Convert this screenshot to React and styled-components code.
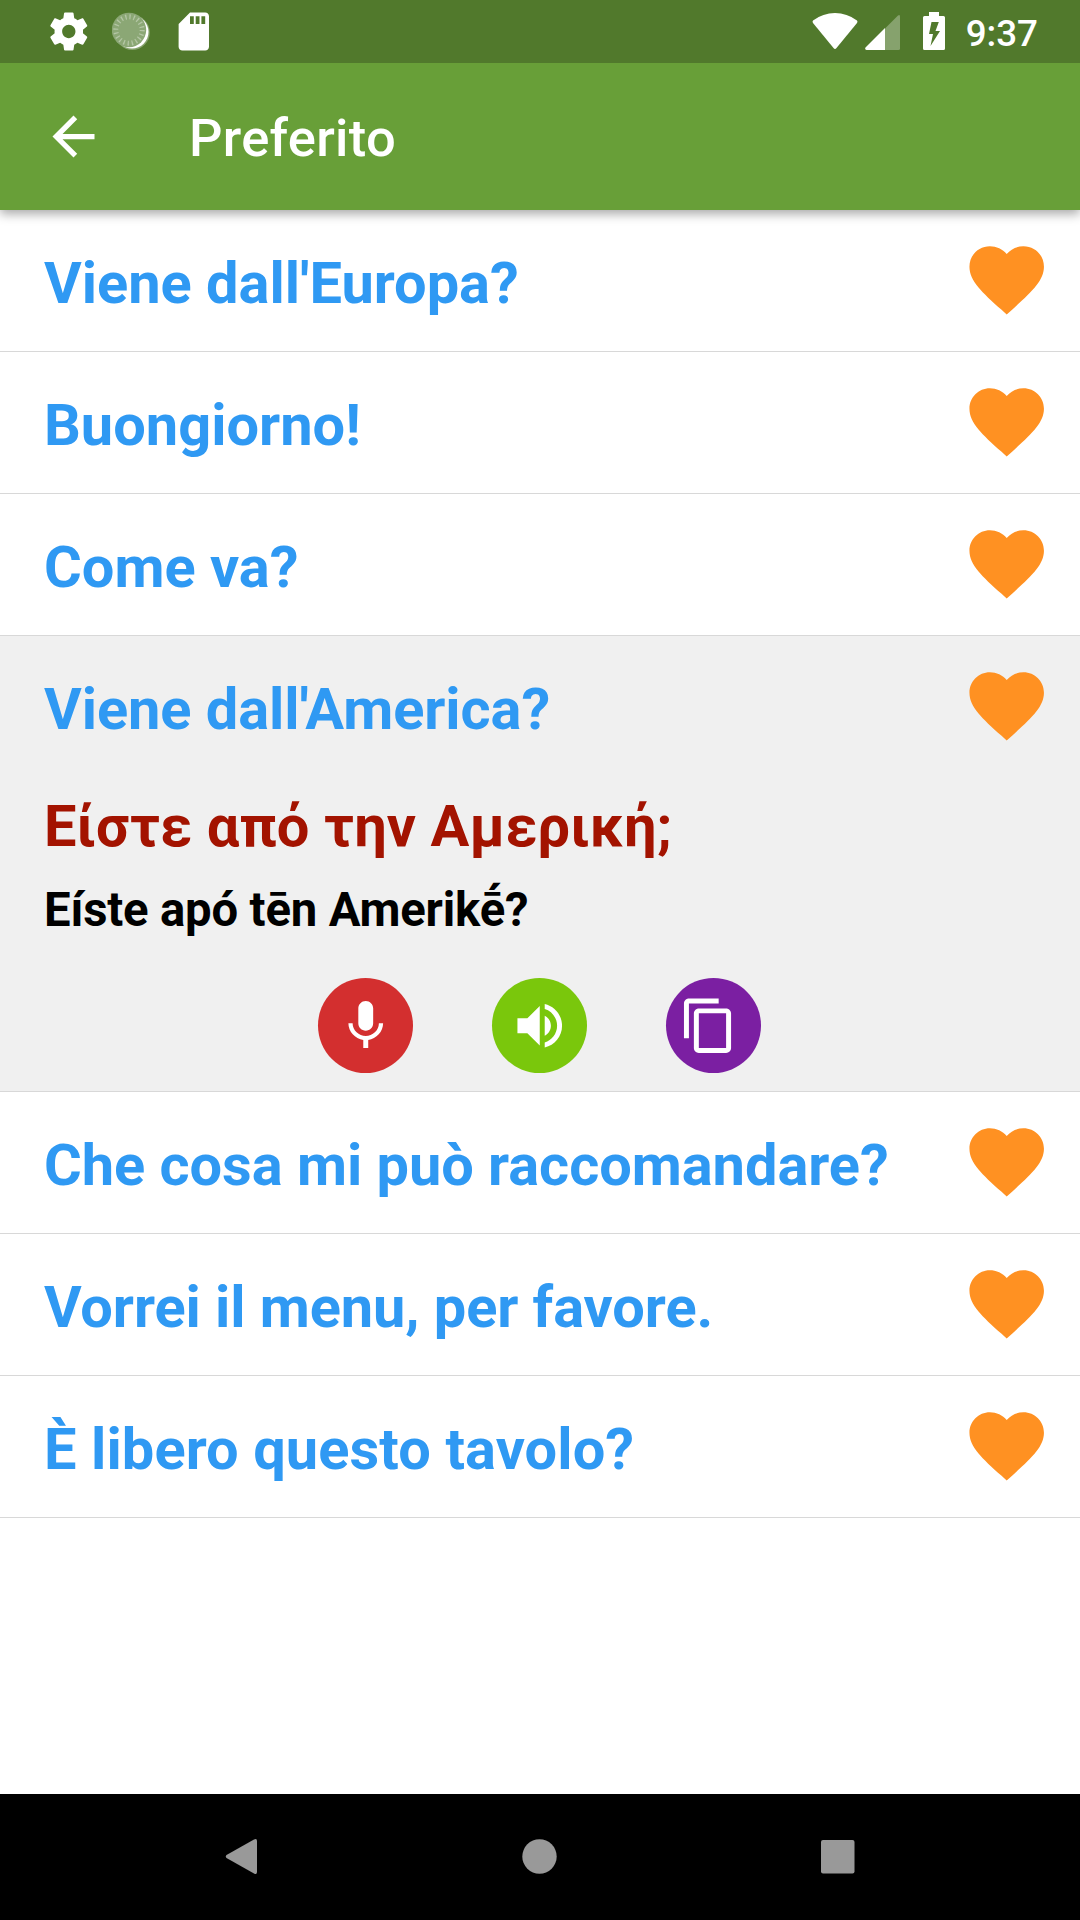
import React from "react";
import styled, { createGlobalStyle } from "styled-components";

const GlobalStyle = createGlobalStyle`
  * {
    box-sizing: border-box;
  }
  body {
    margin: 0;
    background: #ffffff;
    font-family: Roboto, "Noto Sans", sans-serif;
  }
  h1, h2, p, ul {
    margin: 0;
    padding: 0;
  }
  svg {
    display: block;
    flex: none;
  }
`;

const Screen = styled.div`
  width: 1080px;
  height: 1920px;
  display: flex;
  flex-direction: column;
  background: #ffffff;
  overflow: hidden;
`;

const StatusBar = styled.div`
  height: 63px;
  flex: none;
  display: flex;
  justify-content: space-between;
  background: #51792c;
  color: white;
  padding: 0 42px 0 45.5px;
  z-index: 2;
`;

const StatusGroup = styled.div`
  display: flex;
  align-items: center;
`;

const StatusIcon = styled.svg`
  width: ${(props) => props.$width}px;
  height: 63px;
  margin-right: ${(props) => props.$gap || 0}px;
`;

const Clock = styled.time`
  font-size: 36.75px;
  font-weight: 500;
  line-height: 63px;
  padding-top: 3px;
`;

const AppBar = styled.header`
  height: 147px;
  flex: none;
  display: flex;
  align-items: center;
  gap: 84px;
  padding-left: 42px;
  background: #689f38;
  color: white;
  box-shadow: 0 4px 10px rgba(0, 0, 0, 0.34);
  z-index: 1;
  h1 {
    font-size: 52.5px;
    font-weight: 500;
    line-height: 62px;
    letter-spacing: 0.3px;
    padding-top: 3px;
  }
`;

const PhraseList = styled.ul`
  flex: 1;
  list-style: none;
`;

const PhraseItem = styled.li`
  background: ${(props) => (props.$open ? "#f0f0f0" : "#ffffff")};
  border-bottom: 1px solid #d8d8d8;
`;

const PhraseHeader = styled.div`
  height: 141px;
  display: flex;
  align-items: center;
  justify-content: space-between;
  padding: 0 28.7px 0 44px;
  svg {
    margin-bottom: 1px;
  }
`;

const PhraseText = styled.h2`
  color: #2f99f3;
  font-size: 57.75px;
  font-weight: 700;
  line-height: 68px;
  letter-spacing: ${(props) => props.$tracking || 0}px;
  padding-top: 4px;
  white-space: nowrap;
`;

const Translation = styled.div`
  height: 314px;
  padding: 15px 44px 0;
  font-weight: 700;
`;

const Greek = styled.p`
  color: #a31300;
  font-size: 57.75px;
  line-height: 68px;
  letter-spacing: 0.1px;
`;

const Transcription = styled.p`
  color: #000000;
  font-size: 47.25px;
  line-height: 56px;
  letter-spacing: -0.17px;
  margin-top: 22px;
`;

const Actions = styled.div`
  display: flex;
  justify-content: center;
  gap: 79px;
  margin-top: 40px;
  margin-left: -1px;
`;

const RoundButton = styled.button`
  width: 95px;
  height: 95px;
  border: none;
  border-radius: 50%;
  padding: 0 ${(props) => props.$shift || 0}px 0 0;
  display: flex;
  align-items: center;
  justify-content: center;
  background: ${(props) => props.$color};
`;

const NavBar = styled.nav`
  height: 126px;
  flex: none;
  display: flex;
  justify-content: center;
  align-items: center;
  gap: 235px;
  padding: 0 1px 1px 0;
  background: #000000;
  svg {
    width: 63px;
    height: 63px;
    fill: #999999;
  }
`;

const Icon = ({ d, size = 59.5, color = "#ffffff" }) => (
  <svg width={size} height={size} viewBox="0 0 24 24" fill={color}>
    <path d={d} />
  </svg>
);

const icons = {
  back: "M20 11H7.83l5.59-5.59L12 4l-8 8 8 8 1.41-1.41L7.83 13H20v-2z",
  heart:
    "M12 21.35l-1.45-1.32C5.4 15.36 2 12.28 2 8.5 2 5.42 4.42 3 7.5 3c1.74 0 3.41.81 4.5 2.09C13.09 3.81 14.76 3 16.5 3 19.58 3 22 5.42 22 8.5c0 3.78-3.4 6.86-8.55 11.54L12 21.35z",
  mic: "M12 14c1.66 0 2.99-1.34 2.99-3L15 5c0-1.66-1.34-3-3-3S9 3.34 9 5v6c0 1.66 1.34 3 3 3zm5.3-3c0 3-2.54 5.1-5.3 5.1S6.7 14 6.7 11H5c0 3.41 2.72 6.23 6 6.72V21h2v-3.28c3.28-.48 6-3.3 6-6.72h-1.7z",
  volume:
    "M3 9v6h4l5 5V4L7 9H3zm13.5 3c0-1.77-1.02-3.29-2.5-4.03v8.05c1.48-.73 2.5-2.25 2.5-4.02zM14 3.23v2.06c2.89.86 5 3.54 5 6.71s-2.11 5.85-5 6.71v2.06c4.01-.91 7-4.49 7-8.77s-2.99-7.86-7-8.77z",
  copy: "M16 1H4c-1.1 0-2 .9-2 2v14h2V3h12V1zm3 4H8c-1.1 0-2 .9-2 2v14c0 1.1.9 2 2 2h11c1.1 0 2-.9 2-2V7c0-1.1-.9-2-2-2zm0 16H8V7h11v14z",
  settings:
    "M19.43 12.98c.04-.32.07-.64.07-.98s-.03-.66-.07-.98l2.11-1.65c.19-.15.24-.42.12-.64l-2-3.46c-.12-.22-.39-.3-.61-.22l-2.49 1c-.52-.4-1.08-.73-1.69-.98l-.38-2.65C14.46 2.18 14.25 2 14 2h-4c-.25 0-.46.18-.49.42l-.38 2.65c-.61.25-1.17.59-1.69.98l-2.49-1c-.23-.09-.49 0-.61.22l-2 3.46c-.13.22-.07.49.12.64l2.11 1.65c-.04.32-.07.65-.07.98s.03.66.07.98l-2.11 1.65c-.19.15-.24.42-.12.64l2 3.46c.12.22.39.3.61.22l2.49-1c.52.4 1.08.73 1.69.98l.38 2.65c.03.24.24.42.49.42h4c.25 0 .46-.18.49-.42l.38-2.65c.61-.25 1.17-.59 1.69-.98l2.49 1c.23.09.49 0 .61-.22l2-3.46c.12-.22.07-.49-.12-.64l-2.11-1.65zM12 15.5c-1.93 0-3.5-1.57-3.5-3.5s1.57-3.5 3.5-3.5 3.5 1.57 3.5 3.5-1.57 3.5-3.5 3.5z",
  sdCard:
    "M18 2h-8L4.02 8 4 20c0 1.1.9 2 2 2h12c1.1 0 2-.9 2-2V4c0-1.1-.9-2-2-2zm-6 6h-2V4h2v4zm3 0h-2V4h2v4zm3 0h-2V4h2v4z",
};

const Spinner = () => (
  <StatusIcon $width={40} $gap={19} viewBox="0 0 40 63">
    <circle cx="20.3" cy="32.5" r="17.5" fill="#86a26d" />
    <circle cx="20" cy="32" r="16.5" fill="#ffffff" />
    <circle cx="17" cy="30" r="17.2" fill="#8ba775" />
    <circle
      cx="17"
      cy="30"
      r="13.2"
      fill="none"
      stroke="#b4c6a5"
      strokeWidth="5"
      strokeDasharray="1.3 2.847"
    />
  </StatusIcon>
);

const phrases = [
  { text: "Viene dall'Europa?" },
  { text: "Buongiorno!" },
  { text: "Come va?" },
  {
    text: "Viene dall'America?",
    tracking: -0.06,
    greek: "Είστε από την Αμερική;",
    transcription: "Eíste apó tēn Amerikḗ?",
  },
  { text: "Che cosa mi può raccomandare?", tracking: -0.04 },
  { text: "Vorrei il menu, per favore.", tracking: -0.08 },
  { text: "È libero questo tavolo?", tracking: 0.1 },
];

const Phrase = ({ phrase }) => (
  <PhraseItem $open={!!phrase.greek}>
    <PhraseHeader>
      <PhraseText $tracking={phrase.tracking}>{phrase.text}</PhraseText>
      <Icon d={icons.heart} size={89.4} color="#ff9122" />
    </PhraseHeader>
    {phrase.greek && (
      <Translation>
        <Greek>{phrase.greek}</Greek>
        <Transcription>{phrase.transcription}</Transcription>
        <Actions>
          <RoundButton $color="#d32f2f">
            <Icon d={icons.mic} />
          </RoundButton>
          <RoundButton $color="#7ac70c">
            <Icon d={icons.volume} />
          </RoundButton>
          <RoundButton $color="#7b1fa2" $shift={9}>
            <Icon d={icons.copy} />
          </RoundButton>
        </Actions>
      </Translation>
    )}
  </PhraseItem>
);

const App = () => (
  <>
    <GlobalStyle />
    <Screen>
      <StatusBar>
        <StatusGroup>
          <StatusIcon $width={45.6} $gap={21} viewBox="0 0 24 24" fill="#ffffff">
            <path d={icons.settings} />
          </StatusIcon>
          <Spinner />
          <StatusIcon $width={45.6} viewBox="0 0 24 24" fill="#ffffff">
            <path d={icons.sdCard} />
          </StatusIcon>
        </StatusGroup>
        <StatusGroup>
          {/* wifi */}
          <StatusIcon $width={46} $gap={7} viewBox="0 0 46 63">
            <path
              d="M1 20.5Q11 13 23 13T45 20.5Q46 21.5 45 23L24.5 48Q23 49.8 21.5 48L1 23Q0 21.5 1 20.5Z"
              fill="#ffffff"
            />
          </StatusIcon>
          {/* cell signal */}
          <StatusIcon $width={35} $gap={23} viewBox="0 0 35 63">
            <path d="M20 28.5L33 15.5Q35 14 35 16.5V48.5Q35 50 33.5 50H20Z" fill="#86a26d" />
            <path d="M20 28V50H1.5Q-0.5 49.5 0.5 47.5Z" fill="#ffffff" />
          </StatusIcon>
          {/* battery charging */}
          <StatusIcon $width={22} $gap={21} viewBox="0 0 22 63">
            <path
              fillRule="evenodd"
              d="M6 12H16V16H20.5Q22 16 22 17.5V48.5Q22 50 20.5 50H1.5Q0 50 0 48.5V17.5Q0 16 1.5 16H6ZM8.5 22L6 34H10L7.5 46L17 31H12.5L15.8 22Z"
              fill="#ffffff"
            />
          </StatusIcon>
          <Clock>9:37</Clock>
        </StatusGroup>
      </StatusBar>
      <AppBar>
        <Icon d={icons.back} size={63} />
        <h1>Preferito</h1>
      </AppBar>
      <PhraseList>
        {phrases.map((phrase) => (
          <Phrase key={phrase.text} phrase={phrase} />
        ))}
      </PhraseList>
      <NavBar>
        <svg viewBox="0 0 63 63">
          <path d="M47 16V47Q47 50 44 48.5L16.5 33Q15 31.5 16.5 30L44 14.5Q47 13 47 16Z" />
        </svg>
        <svg viewBox="0 0 63 63">
          <circle cx="31.5" cy="31.5" r="17.2" />
        </svg>
        <svg viewBox="0 0 63 63">
          <rect x="15" y="15" width="33.5" height="33.5" rx="2" />
        </svg>
      </NavBar>
    </Screen>
  </>
);

export default App;
